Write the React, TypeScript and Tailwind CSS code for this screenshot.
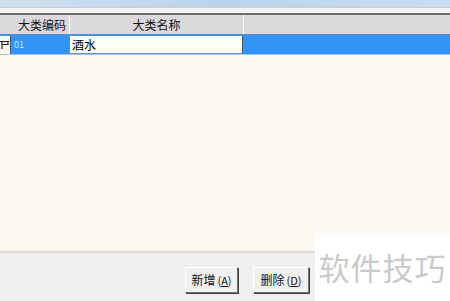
import React from "react";

const font = { fontFamily: '"Noto Sans CJK SC", "Liberation Sans", sans-serif' };

function WinButton({ label, hot, width }: { label: string; hot: string; width: string }) {
  return (
    <div
      className={`${width} h-[26px] flex items-center justify-center bg-[#f1f0f1] border border-t-white border-l-white border-r-[#6f6f6f] border-b-[#6f6f6f] shadow-[1px_1px_0_#404040] text-[12px] text-[#111]`}
    >
      <span>{label}</span>
      <span className="ml-[2px] text-[11px]">
        (<span className="underline">{hot}</span>)
      </span>
    </div>
  );
}

export default function App() {
  return (
    <div className="w-[450px] h-[301px] overflow-hidden relative flex flex-col bg-[#f0eff0]" style={font}>
      {/* blurred toolbar strip */}
      <div className="h-[7px] bg-gradient-to-r from-[#cfe0f0] via-[#bcd3ea] to-[#c9ddf0]" />
      <div className="h-[1px] bg-[#c9ced6]" />
      <div className="h-[5px] bg-[#f4f3f4]" />
      <div className="h-[2px] bg-[#6d6d70]" />

      {/* header */}
      <div className="h-[19px] flex bg-[#dcd9dc] text-[12px] text-[#111] leading-[19px]">
        <div className="w-[12px]" />
        <div className="w-[58px] border-r border-white pl-[6px]">大类编码</div>
        <div className="w-[174px] border-r border-white text-center">大类名称</div>
        <div className="flex-1" />
      </div>

      {/* selected row */}
      <div className="h-[20px] flex border-t-[2px] border-[#4f8fd6] bg-[#3095f6]">
        <div className="w-[11px] bg-[#fdf9f0] border-r border-[#555] flex items-center">
          <svg width="10" height="10" viewBox="0 0 10 10">
            <path d="M0 1.5H9M2 1.5V9M2 4.5H8V1.5" stroke="#222" strokeWidth="1.2" fill="none" />
          </svg>
        </div>
        <div className="w-[58px] pl-[3px] text-[9px] leading-[18px] text-[#cfe6ff]">01</div>
        <div className="w-[174px] bg-[#fffff8] border border-t-0 border-[#6a8fb8] border-r-[#555] pl-[2px] text-[12px] leading-[17px] text-black">
          酒水
        </div>
        <div className="flex-1" />
      </div>

      {/* empty grid area */}
      <div className="flex-1 bg-[#fdf9f0] border-b-[2px] border-[#dcdadb] border-t border-t-[#a8c8ea]" />

      {/* button bar */}
      <div className="h-[48px] flex items-start pt-[14px] pl-[185px] gap-[15px]">
        <WinButton label="新增" hot="A" width="w-[53px]" />
        <WinButton label="删除" hot="D" width="w-[56px]" />
      </div>

      {/* watermark */}
      <div className="absolute right-0 bottom-0 w-[135px] h-[68px] bg-white flex items-center justify-center">
        <span className="text-[31px] tracking-[1px] text-[#cacaca]">软件技巧</span>
      </div>
    </div>
  );
}
